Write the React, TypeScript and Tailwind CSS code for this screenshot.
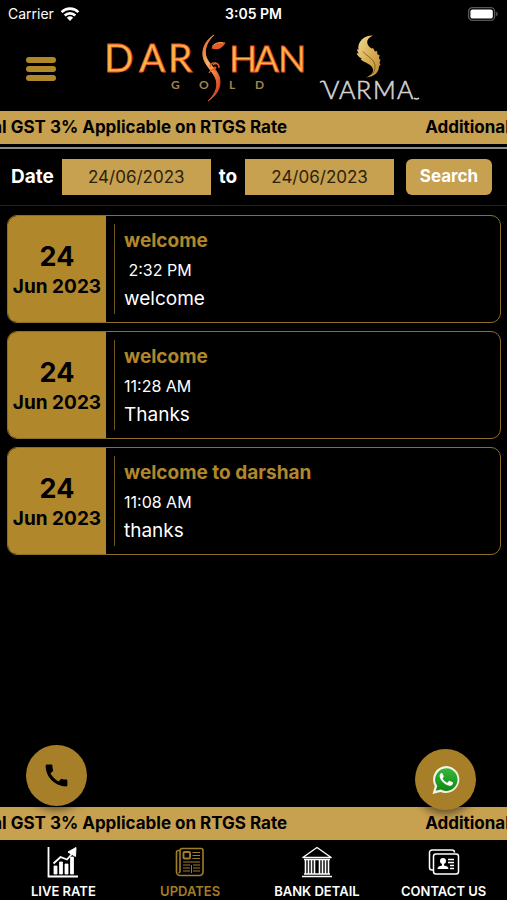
import { MdCall } from 'react-icons/md';

const updates = [
  { day: '24', month: 'Jun 2023', title: 'welcome', time: '\u00a02:32 PM', text: 'welcome' },
  { day: '24', month: 'Jun 2023', title: 'welcome', time: '11:28 AM', text: 'Thanks' },
  { day: '24', month: 'Jun 2023', title: 'welcome to darshan', time: '11:08 AM', text: 'thanks' },
];

const StatusBar = () => (
  <div className="grid grid-cols-3 items-center h-7 px-2 text-white text-sm">
    <div className="flex items-center gap-1.5">
      <span>Carrier</span>
      <svg viewBox="0 0 20 15" className="w-5 h-4" fill="none" stroke="white" strokeWidth="2.6">
        <path d="M1.6 5.6a12 12 0 0 1 16.8 0" />
        <path d="M4.7 9a7.6 7.6 0 0 1 10.6 0" />
        <path d="M10 14.4 6.9 11.2a4.5 4.5 0 0 1 6.2 0z" fill="white" stroke="none" />
      </svg>
    </div>
    <span className="text-center font-semibold whitespace-nowrap">3:05 PM</span>
    <svg viewBox="0 0 32 16" className="w-8 h-4 justify-self-end">
      <rect x="1.6" y="1.6" width="26" height="12.8" rx="4" fill="black" stroke="#57575a" strokeWidth="1.4" />
      <rect x="3.4" y="3.4" width="22.4" height="9.2" rx="2.2" fill="white" />
      <path d="M29.2 5.6v4.8a2.6 2.6 0 0 0 0-4.8z" fill="#57575a" />
    </svg>
  </div>
);

const DarshanLogo = () => (
  <svg viewBox="0 0 200 68" className="w-[200px] h-[68px] overflow-visible" role="img" aria-label="Darshan Gold">
    <defs>
      <linearGradient id="curve" x1="0" y1="0" x2="0.5" y2="1">
        <stop offset="0" stopColor="#e8562a" />
        <stop offset="0.45" stopColor="#f9b25a" />
        <stop offset="0.7" stopColor="#f08a3c" />
        <stop offset="1" stopColor="#dd4a26" />
      </linearGradient>
    </defs>
    <g fill="#ffb545" stroke="#e2502a" strokeWidth="0.8" fontFamily="Lato, sans-serif">
      <text x="-2" y="36" fontSize="39">D</text>
      <text x="33" y="36" fontSize="39">A</text>
      <text x="62" y="36" fontSize="39">R</text>
      <text x="123" y="36" fontSize="37">H</text>
      <text x="148" y="36" fontSize="37">A</text>
      <text x="172" y="36" fontSize="37">N</text>
    </g>
    <path
      d="M108-1C100 4 96 12 97 20c1 9 12 17 13.5 25 1.5 8-3 15-8.500 20 9-6 13.500-14 11.500-23-2-9-12-14-14-23C98.500 12 101.500 5 108-1z"
      fill="url(#curve)"
      stroke="url(#curve)"
      strokeWidth="1"
    />
    <path d="M105.500 12.500c3-6 8-6.500 14-6-2.500 5-7 8.500-14 6z" fill="#e65a28" />
    <path d="M106 10.500c4-4 7-4.500 11-3.500" fill="none" stroke="#ffb45a" strokeWidth="0.9" />
    <path d="M107 29c3-2.500 6-1.500 6 3M104 31c1-6 10-5 9 1M103 37c2-4 5-4 7-2" fill="none" stroke="#e0602c" strokeWidth="1.3" />
    <circle cx="109" cy="32" r="1.4" fill="#e8471f" />
    <g fill="#a3834a" fontFamily="Lato, sans-serif" fontSize="12" fontWeight="700">
      <text x="65" y="53">G</text>
      <text x="93" y="53">O</text>
      <text x="123" y="53">L</text>
      <text x="149" y="53">D</text>
    </g>
  </svg>
);

const VarmaLogo = () => (
  <svg viewBox="0 0 100 66" className="w-[100px] h-[66px] overflow-visible" role="img" aria-label="Varma">
    <defs>
      <linearGradient id="feather" x1="0" y1="0" x2="1" y2="1">
        <stop offset="0" stopColor="#f2dc9a" />
        <stop offset="0.5" stopColor="#d9b056" />
        <stop offset="1" stopColor="#b98a33" />
      </linearGradient>
    </defs>
    <path
      d="M53-.5C45-1 37 5 38.500 14l-1.500-1c.3 2 .8 3 1.800 4.500L36.500 17c1 3 3 4.500 5.500 6L40.500 23.500c4 3 9 4 11.500 7.500 2.500 4 .5 8-6 10.500 9-.5 13-6 13-11l1.500-2-1-1.500 1-3.500-1.500-.5.5-4-2-.5-.5-3.500-2 .5-2-3.500-1.500.5C46 9 45 3 53-.5z"
      fill="url(#feather)"
    />
    <path d="M43 15.500c4 5 11 7 12 14 .4 3-.6 6-2.500 8.500" fill="none" stroke="#7b5a1d" strokeWidth="0.9" />
    <g fill="#d4d4d4" stroke="#d4d4d4" strokeWidth="0.6" fontFamily="Lato, sans-serif" fontSize="25" fontWeight="300">
      <text x="3" y="63">V</text>
      <text x="19" y="63">A</text>
      <text x="36" y="63">R</text>
      <text x="53" y="63">M</text>
      <text x="77" y="63">A</text>
    </g>
    <path d="M0 46.500c1.500-1.500 3-1.500 4-.5M94 62c1.500 1.200 3.500 1.200 5 0" fill="none" stroke="#d4d4d4" strokeWidth="1.5" />
  </svg>
);

const Ticker = () => (
  <div className="overflow-hidden bg-[#c7a050] h-[33px] flex items-center">
    <div className="flex shrink-0 gap-[138px] -ml-[78px] text-[17px] font-bold text-black whitespace-nowrap">
      <span>Additional GST 3% Applicable on RTGS Rate</span>
      <span aria-hidden="true">Additional GST 3% Applicable on RTGS Rate</span>
    </div>
  </div>
);

const SearchBar = () => (
  <form className="flex items-center gap-2 pl-[11px] pr-[15px] py-2.5 border-b border-[#0c2b25]" onSubmit={(e) => e.preventDefault()}>
    <label htmlFor="from" className="text-[19px] font-bold text-white">Date</label>
    <input
      id="from"
      defaultValue="24/06/2023"
      className="min-w-0 flex-1 h-9 bg-[#c7a050] text-center text-[17px] text-[#2b220d]"
    />
    <label htmlFor="to" className="text-[19px] font-bold text-white">to</label>
    <input
      id="to"
      defaultValue="24/06/2023"
      className="min-w-0 flex-1 h-9 bg-[#c7a050] text-center text-[17px] text-[#2b220d]"
    />
    <button type="submit" className="ml-1 w-[86px] h-9 rounded-md bg-[#c7a050] text-[17px] font-bold text-white">
      Search
    </button>
  </form>
);

const UpdateCard = ({ item }: { item: (typeof updates)[number] }) => (
  <li className="flex h-[108px] overflow-hidden rounded-[10px] border border-[#8f6f26]">
    <div className="w-[98px] shrink-0 pt-1 flex flex-col items-center justify-center bg-[#b0882b] text-black font-bold whitespace-nowrap">
      <span className="text-[27px] leading-8">{item.day}</span>
      <span className="text-[19px] leading-7">{item.month}</span>
    </div>
    <div className="flex-1 my-2 ml-2 pl-[9px] border-l border-[#6e561f]">
      <h2 className="text-[19px] leading-[34px] font-bold text-[#b0882b]">{item.title}</h2>
      <p className="text-[16px] leading-6 text-white">{item.time}</p>
      <p className="text-[19px] leading-[34px] text-white">{item.text}</p>
    </div>
  </li>
);

const RateIcon = () => (
  <svg viewBox="0 0 32 32" className="size-8" fill="none" stroke="white">
    <path d="M1.500 1v29.500H31" strokeWidth="1.8" />
    <path d="M7 20h3v8H7zM12.500 16h3v12h-3zM18 18h3v10h-3zM23.500 11h3v17h-3z" fill="white" strokeWidth="0.8" />
    <path d="M6.500 17.500 13.500 11l6.500 2.500 7-8" strokeWidth="1.8" />
    <path d="m21 6 8-4.500-.5 9z" fill="white" strokeWidth="1" />
  </svg>
);

const NewsIcon = () => (
  <svg viewBox="0 0 32 32" className="size-8" fill="none" stroke="#a27d28">
    <path d="M6 4.500H4.500A2 2 0 0 0 2.500 6.500V26a3.500 3.500 0 0 0 3.500 3.500h19.500a3.500 3.500 0 0 0 3.500-3.500V4.500a2 2 0 0 0-2-2H8a2 2 0 0 0-2 2V25a2 2 0 0 1-1.500 2" strokeWidth="1.6" />
    <rect x="9.500" y="6" width="6.500" height="6.500" rx="1" strokeWidth="1.9" />
    <path d="M18.500 6.500H26M18.500 9.500H26M18.500 12.500H26M9 16h17M9 19h7M19 19h7M9 22h7M19 22h7M9 25h7M19 25h7M17.500 19v8" strokeWidth="1" />
  </svg>
);

const BankIcon = () => (
  <svg viewBox="0 0 32 32" className="size-8" fill="none" stroke="white">
    <path d="M16 1.500 1.800 11.500h28.400z" strokeWidth="1.3" strokeLinejoin="round" />
    <path d="M3 13.500h26M3 28h26M1 30.500h30" strokeWidth="1.3" />
    <path d="M4.500 14v14M7.500 14v14M10.500 14v14M13.500 14v14M18.500 14v14M21.500 14v14M24.500 14v14M27.500 14v14" strokeWidth="1.6" />
  </svg>
);

const ContactIcon = () => (
  <svg viewBox="0 0 32 32" className="size-8" fill="none" stroke="white">
    <path d="M5 24H4a2.500 2.500 0 0 1-2.500-2.500v-15A2.500 2.500 0 0 1 4 4h20a2.500 2.500 0 0 1 2.500 2.500" strokeWidth="1.5" />
    <rect x="5.500" y="8" width="25" height="20" rx="2.500" strokeWidth="1.5" />
    <circle cx="15" cy="15" r="3" fill="white" stroke="none" />
    <path d="M14 17h2v2.500c2.500.5 4.500 1 4.500 3.500h-11c0-2.500 2-3 4.500-3.500z" fill="white" stroke="none" />
    <path d="M20 13.500h6M20 16.500h6M22 19.500h4M22 22.500h4" strokeWidth="1.5" />
  </svg>
);

const WhatsappIcon = () => (
  <svg viewBox="0 0 30 30" className="w-[30px] h-[30px]">
    <defs>
      <linearGradient id="wa" x1="0" y1="0" x2="0" y2="1">
        <stop offset="0" stopColor="#35b83a" />
        <stop offset="1" stopColor="#118a12" />
      </linearGradient>
    </defs>
    <path d="M15.500 1A13.500 13.500 0 0 0 3.800 21.200L1.500 29l8-2.100A13.500 13.500 0 1 0 15.500 1z" fill="#f4f4ec" />
    <path d="M15.500 3.300A11.300 11.300 0 0 0 6.200 21l-1.400 4.800 5-1.300A11.300 11.300 0 1 0 15.500 3.300z" fill="url(#wa)" />
    <path
      d="M11.300 8.200c-.5-.5-1.200-.3-1.700.3-1.600 1.800-1.200 4 .6 6.500 2 2.800 4.300 4.700 7.300 5.600 2 .6 4-.3 4.400-2.200.1-.7 0-1-.6-1.300l-2.500-1.200c-.5-.2-.8-.1-1.100.3l-1 1.200c-.3.3-.6.3-1 .1-1.700-.8-3-2-4-3.700-.2-.4-.1-.6.1-.9l.8-1c.2-.3.2-.6.100-.9z"
      fill="white"
    />
  </svg>
);

const tabs = [
  { label: 'LIVE RATE', icon: <RateIcon /> },
  { label: 'UPDATES', icon: <NewsIcon />, active: true },
  { label: 'BANK DETAIL', icon: <BankIcon /> },
  { label: 'CONTACT US', icon: <ContactIcon /> },
];

const App = () => {
  return (
    <div className="min-h-screen flex flex-col bg-black font-[Inter,sans-serif]">
      <StatusBar />

      {/* Header */}
      <header className="flex items-start h-[83px] pt-2 pl-[26px]">
        <button type="button" aria-label="Menu" className="mt-[21px] flex flex-col gap-[3px] w-[30px]">
          <span className="h-1.5 w-full rounded-full bg-[#b0882b]" />
          <span className="h-1.5 w-full rounded-full bg-[#b0882b]" />
          <span className="h-1.5 w-full rounded-full bg-[#b0882b]" />
        </button>
        <div className="flex items-start gap-3.5 ml-[50px]">
          <DarshanLogo />
          <VarmaLogo />
        </div>
      </header>

      <Ticker />
      <div className="mt-[3px] border-b-2 border-[#8c8c8c]" />
      <SearchBar />

      {/* Updates list */}
      <main className="flex-1 pl-[7px] pr-1.5 pt-[9px]">
        <ul className="flex flex-col gap-2">
          {updates.map((item, i) => (
            <UpdateCard key={i} item={item} />
          ))}
        </ul>
      </main>

      <footer className="relative">
        <Ticker />
        {/* Floating buttons */}
        <a
          href="tel:"
          aria-label="Call"
          className="absolute left-[26px] -top-[62px] size-[61px] rounded-full bg-[#a67f28] shadow-[0_4px_8px_rgba(0,0,0,0.5)] flex items-center justify-center text-black"
        >
          <MdCall size={29} />
        </a>
        <a
          href="#whatsapp"
          aria-label="WhatsApp"
          className="absolute right-[31px] -top-[58px] size-[61px] rounded-full bg-[#a67f28] shadow-[0_4px_8px_rgba(0,0,0,0.5)] flex items-center justify-center"
        >
          <WhatsappIcon />
        </a>
        <nav className="grid grid-cols-4 h-[60px] pt-1.5">
          {tabs.map((tab) => (
            <a
              key={tab.label}
              href="#"
              className={`flex flex-col items-center gap-1 text-[13px] leading-[18px] font-semibold whitespace-nowrap ${tab.active ? 'text-[#a27d28]' : 'text-white'}`}
            >
              {tab.icon}
              {tab.label}
            </a>
          ))}
        </nav>
      </footer>
    </div>
  );
};

export default App;
